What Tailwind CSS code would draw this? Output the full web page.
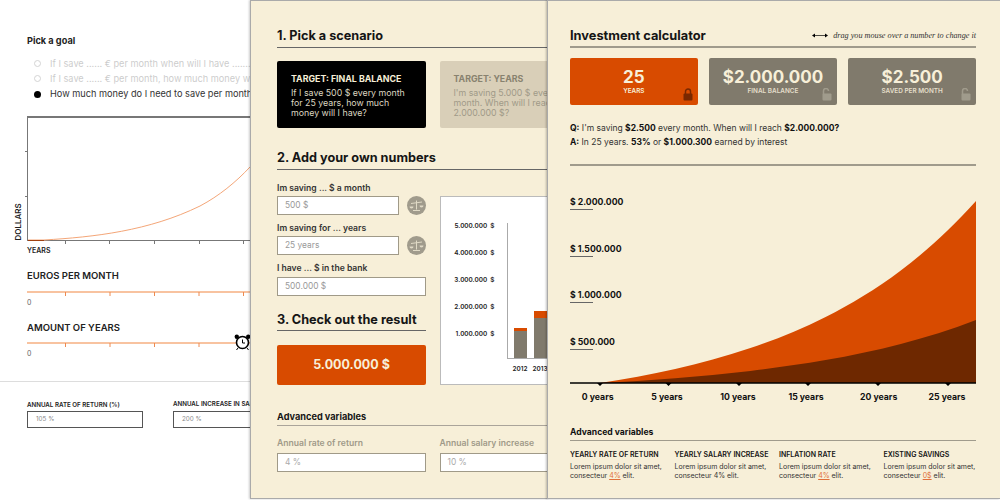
<!DOCTYPE html>
<html>
<head>
<meta charset="utf-8">
<script src="https://cdn.jsdelivr.net/npm/@tailwindcss/browser@4"></script>
</head>
<body class="m-0 bg-white">
<div class="relative w-[1000px] h-[500px] overflow-hidden bg-white font-['Inter',sans-serif] text-[#222]">

  <!-- Sheet 1: white goal picker -->
  <div class="absolute left-0 top-0 w-[250px] h-[500px] overflow-hidden">
    <div class="w-[400px] pt-[34px] pl-[27px]">
      <h3 class="text-[9.200px] leading-[13px] font-bold">Pick a goal</h3>
      <ul class="mt-[9px] pl-[7px] text-[9.200px] leading-[15.200px] text-[#333] whitespace-nowrap">
        <li class="flex items-center gap-[9px] opacity-25"><span class="w-[7px] h-[7px] rounded-full border border-[#555]"></span>If I save ...... € per month when will I have ....... €</li>
        <li class="flex items-center gap-[9px] opacity-25"><span class="w-[7px] h-[7px] rounded-full border border-[#555]"></span>If I save ...... € per month, how much money will I have</li>
        <li class="flex items-center gap-[9px]"><span class="w-[7px] h-[7px] rounded-full bg-black"></span>How much money do I need to save per month</li>
      </ul>
      <div class="relative mt-[14px] w-[300px] h-[125px] border-l border-t-2 border-[#777]">
        <svg class="absolute left-[-4px] top-[-2px] overflow-visible" width="260" height="130" viewBox="0 0 260 130" fill="none">
          <path d="M1 35.500h3M1 80.500h3" stroke="#777"/>
          <path d="M4 124.500h230" stroke="#777"/>
          <path d="M41.500 125v3M85.500 125v3M130.500 125v3M175.500 125v3M219.500 125v3" stroke="#777"/>
          <path d="M4 124H20C70 121 125 115 176 90C195 80 212 66 226 51" stroke="#f4a678"/>
          <path d="M4 124.500H20" stroke="#a04010"/>
        </svg>
        <span class="absolute left-[-10px] top-[118px] origin-left -rotate-90 text-[8px] leading-[9px] font-semibold">DOLLARS</span>
      </div>
      <div class="mt-[5px] text-[7px] leading-[10px] font-semibold">YEARS</div>
      <h4 class="mt-[13px] text-[9.500px] leading-[14px] font-semibold">EUROS PER MONTH</h4>
      <div class="relative mt-[8px] w-[300px] h-[2px] bg-[#f8c3a0]">
        <svg class="absolute left-0 top-[1px]" width="230" height="5"><path d="M38.500 0v4M83 0v4M127.500 0v4M172 0v4M216.500 0v4" stroke="#ee8a50"/></svg>
      </div>
      <div class="mt-[5px] text-[7px] leading-[10px] text-[#666]">0</div>
      <h4 class="mt-[13px] text-[9.500px] leading-[14px] font-semibold">AMOUNT OF YEARS</h4>
      <div class="relative mt-[7px] w-[300px] h-[2px] bg-[#f8c3a0]">
        <svg class="absolute left-0 top-[1px]" width="180" height="5"><path d="M38.500 0v4M83 0v4M127.500 0v4M172 0v4" stroke="#ee8a50"/></svg>
        <svg class="absolute left-[207px] top-[-8px]" width="17" height="17" viewBox="0 0 17 17" fill="none">
          <circle cx="8.500" cy="8.500" r="6" fill="#fff" stroke="#000" stroke-width="1.600"/>
          <circle cx="2.800" cy="2.800" r="2.200" fill="#000"/>
          <circle cx="14.200" cy="2.800" r="2.200" fill="#000"/>
          <path d="M8.500 5.500v3.500h2.500M4 14l-1.500 2M13 14l1.500 2" stroke="#000"/>
        </svg>
      </div>
      <div class="mt-[5px] text-[7px] leading-[10px] text-[#666]">0</div>
    </div>
    <div class="mt-[22px] h-px bg-[#ddd]"></div>
    <div class="flex pl-[27px] pt-[18px] w-[400px] gap-[30px]">
      <div class="w-[116px] shrink-0">
        <div class="text-[6.200px] leading-[9px] font-semibold whitespace-nowrap">ANNUAL RATE OF RETURN (%)</div>
        <div class="mt-[2px] h-[17px] border border-[#555] pl-[8px] text-[6.300px] leading-[15px] text-[#888]">105 %</div>
      </div>
      <div class="w-[116px] shrink-0 mt-[-1px]">
        <div class="text-[6.200px] leading-[9px] font-semibold whitespace-nowrap">ANNUAL INCREASE IN SALARY</div>
        <div class="mt-[3px] h-[17px] border border-[#555] pl-[8px] text-[6.300px] leading-[15px] text-[#888]">200 %</div>
      </div>
    </div>
  </div>

  <!-- Sheet 2: scenario form -->
  <div class="absolute left-[250px] top-0 w-[299px] h-[499px] overflow-hidden bg-[#f7efd8] border border-[#aaa] shadow-[-1px_0_2px_rgba(0,0,0,0.2)]">
    <div class="w-[480px] pl-[26px] pt-[26px]">
      <h2 class="w-[300px] text-[12.700px] leading-[18px] font-bold text-[#151515] border-b border-[#666] pb-[2px]">1. Pick a scenario</h2>
      <div class="flex gap-[13.500px] mt-[13px]">
        <div class="w-[149px] h-[67px] rounded-[2px] bg-black px-[14px] pt-[11px]">
          <div class="text-[8.800px] leading-[14px] font-bold text-[#f7efd8]">TARGET: FINAL BALANCE</div>
          <p class="mt-[2px] text-[8.800px] leading-[10.200px] text-[#ddd6c0]">If I save 500 $ every month for 25 years, how much money will I have?</p>
        </div>
        <div class="w-[149px] h-[67px] rounded-[2px] bg-[#d9cfb8] px-[14px] pt-[11px]">
          <div class="text-[8.800px] leading-[14px] font-bold text-[#88826f]">TARGET: YEARS</div>
          <p class="mt-[2px] text-[8.800px] leading-[10.200px] text-[#a09a88]">I'm saving 5.000 $ every month. When will I reach 2.000.000 $?</p>
        </div>
      </div>

      <h2 class="mt-[21px] w-[300px] text-[12.700px] leading-[18px] font-bold text-[#151515] border-b border-[#666] pb-[2px]">2. Add your own numbers</h2>
      <div class="flex mt-[11px] gap-[13.500px]">
        <div class="w-[149px]">
          <div class="text-[8.600px] leading-[14px] font-semibold text-[#333]">Im saving ... $ a month</div>
          <div class="flex items-center justify-between w-[149px] mt-px">
            <div class="w-[122px] h-[19px] border border-[#a09a88] bg-white pl-[7px] text-[8.400px] leading-[17px] text-[#999]">500 $</div>
            <svg width="19" height="19" viewBox="0 0 19 19"><circle cx="9.500" cy="9.500" r="9.500" fill="#a09b8c"/><path d="M9.500 4.500v9M6 14.500h7" stroke="#e0dac6" fill="none"/><path d="M4 7.500l11-1.500" stroke="#e0dac6" fill="none"/><path d="M2.500 10.500h4a2 2 0 0 1-4 0zM12.500 9.500h4a2 2 0 0 1-4 0z" fill="#e0dac6"/></svg>
          </div>
          <div class="mt-[6px] text-[8.600px] leading-[14px] font-semibold text-[#333]">Im saving for ... years</div>
          <div class="flex items-center justify-between w-[149px] mt-px">
            <div class="w-[122px] h-[19px] border border-[#a09a88] bg-white pl-[7px] text-[8.400px] leading-[17px] text-[#999]">25 years</div>
            <svg width="19" height="19" viewBox="0 0 19 19"><circle cx="9.500" cy="9.500" r="9.500" fill="#a09b8c"/><path d="M9.500 4.500v9M6 14.500h7" stroke="#e0dac6" fill="none"/><path d="M4 7.500l11-1.500" stroke="#e0dac6" fill="none"/><path d="M2.500 10.500h4a2 2 0 0 1-4 0zM12.500 9.500h4a2 2 0 0 1-4 0z" fill="#e0dac6"/></svg>
          </div>
          <div class="mt-[6px] text-[8.600px] leading-[14px] font-semibold text-[#333]">I have ... $ in the bank</div>
          <div class="mt-[2px] h-[19px] border border-[#a09a88] bg-white pl-[7px] text-[8.400px] leading-[17px] text-[#999]">500.000 $</div>
          <h2 class="mt-[15px] text-[12.700px] leading-[18px] font-bold text-[#151515] border-b border-[#666] pb-px whitespace-nowrap">3. Check out the result</h2>
          <div class="mt-[14px] h-[40px] rounded-[2px] bg-[#d84b00] text-center text-[12.500px] leading-[40px] font-bold text-[#f7efd8]">5.000.000 $</div>
        </div>
        <div class="relative w-[300px] h-[189px] mt-[15px] border border-[#bbb] bg-white text-[6.400px] font-semibold text-[#222]">
          <div class="absolute left-0 top-[24px] flex flex-col gap-[17px] w-[54px] leading-[10px] text-right">
            <span>5.000.000 &nbsp;$</span><span>4.000.000 &nbsp;$</span><span>3.000.000 &nbsp;$</span><span>2.000.000 &nbsp;$</span><span>1.000.000 &nbsp;$</span>
          </div>
          <div class="absolute left-[66px] top-[26px] w-[240px] h-[136px] border-l border-b border-[#aaa] flex items-end gap-[7px] pl-[6px]">
            <div class="w-[13px] h-[30px] bg-[#807a6c] border-t-[3px] border-[#d84b00]"></div>
            <div class="w-[13px] h-[47px] bg-[#807a6c] border-t-[7px] border-[#d84b00]"></div>
          </div>
          <div class="absolute left-[72px] top-[167px] flex gap-[5px] leading-[10px]">
            <span class="w-[15px] text-center">2012</span><span class="w-[15px] text-center">2013</span>
          </div>
        </div>
      </div>

      <h3 class="mt-[25px] w-[300px] text-[9.200px] leading-[14px] font-bold text-[#151515] border-b border-[#aaa49a] pb-px">Advanced variables</h3>
      <div class="flex gap-[13.500px] mt-[11px]">
        <div class="w-[149px]">
          <div class="text-[8.600px] leading-[12px] font-semibold text-[#a09a88]">Annual rate of return</div>
          <div class="mt-[4px] h-[19px] border border-[#a09a88] bg-white pl-[7px] text-[8.400px] leading-[17px] text-[#aaa]">4 %</div>
        </div>
        <div class="w-[149px]">
          <div class="text-[8.600px] leading-[12px] font-semibold text-[#a09a88]">Annual salary increase</div>
          <div class="mt-[4px] h-[19px] border border-[#a09a88] bg-white pl-[7px] text-[8.400px] leading-[17px] text-[#aaa]">10 %</div>
        </div>
      </div>
    </div>
  </div>

  <!-- Sheet 3: investment calculator -->
  <div class="absolute left-[547px] top-0 w-[453px] h-[499px] overflow-hidden bg-[#f7efd8] border-l border-t border-b border-[#aaa] shadow-[-1px_0_2px_rgba(0,0,0,0.25)]">
    <div class="w-[406px] ml-[22px] pt-[27px]">
      <div class="flex items-center justify-between border-b-2 border-[#a09b8c] pb-[2px] h-[20px]">
        <h1 class="text-[12.800px] leading-[18px] font-bold text-[#151515]">Investment calculator</h1>
        <div class="flex items-center gap-[5px] text-[8.200px] italic font-['Liberation_Serif',serif] text-[#333]">
          <svg width="16" height="5" viewBox="0 0 16 5"><path d="M2 2.500h12" stroke="#000" stroke-width="0.700"/><path d="M0 2.500l3-2v4zM16 2.500l-3-2v4z" fill="#000"/></svg>
          drag you mouse over a number to change it
        </div>
      </div>
      <div class="grid grid-cols-3 gap-[11.500px] mt-[10px]">
        <div class="relative h-[47px] rounded-[2px] bg-[#d84b00] pt-[9px] text-center text-[#f7efd8]">
          <div class="text-[17px] leading-[20px] font-bold">25</div>
          <div class="text-[6.400px] leading-[8px] font-semibold">YEARS</div>
          <svg class="absolute right-[5px] bottom-[4px]" width="10" height="13" viewBox="0 0 10 13"><path d="M2.500 6V3.500a2.500 2.500 0 0 1 5 0V6" fill="none" stroke="#7a2800" stroke-width="1.500"/><rect x="0.500" y="5.500" width="9" height="7" rx="1" fill="#7a2800"/></svg>
        </div>
        <div class="relative h-[47px] rounded-[2px] bg-[#807a6c] pt-[9px] text-center text-[#f7efd8]">
          <div class="text-[17px] leading-[20px] font-bold">$2.000.000</div>
          <div class="text-[6.400px] leading-[8px] font-semibold text-[#e5dfca]">FINAL BALANCE</div>
          <svg class="absolute right-[5px] bottom-[4px]" width="10" height="13" viewBox="0 0 10 13"><path d="M1.500 6V3a2.500 2.500 0 0 1 5 0" fill="none" stroke="#a09b8c" stroke-width="1.500"/><rect x="0.500" y="5.500" width="9" height="7" rx="1" fill="#a09b8c"/></svg>
        </div>
        <div class="relative h-[47px] rounded-[2px] bg-[#807a6c] pt-[9px] text-center text-[#f7efd8]">
          <div class="text-[17px] leading-[20px] font-bold">$2.500</div>
          <div class="text-[6.400px] leading-[8px] font-semibold text-[#e5dfca]">SAVED PER MONTH</div>
          <svg class="absolute right-[5px] bottom-[4px]" width="10" height="13" viewBox="0 0 10 13"><path d="M1.500 6V3a2.500 2.500 0 0 1 5 0" fill="none" stroke="#a09b8c" stroke-width="1.500"/><rect x="0.500" y="5.500" width="9" height="7" rx="1" fill="#a09b8c"/></svg>
        </div>
      </div>
      <div class="mt-[17px] text-[8.500px] leading-[13.500px] text-[#333]">
        <p><b class="text-[#111]">Q:</b> I'm saving <b class="text-[#111]">$2.500</b> every month. When will I reach <b class="text-[#111]">$2.000.000?</b></p>
        <p><b class="text-[#111]">A:</b> In 25 years. <b class="text-[#111]">53%</b> or <b class="text-[#111]">$1.000.300</b> earned by interest</p>
      </div>
      <div class="mt-[15px] h-[2px] bg-[#a09b8c]"></div>

      <svg class="mt-[24px] block" width="406" height="215" viewBox="0 0 406 215">
        <path d="M30 193C55.070 189.200 80.130 184.660 105.200 179C130.270 173.340 155.330 166.560 180.400 158.100C205.470 149.640 230.530 139.500 255.600 126.900C280.670 114.300 305.730 99.200 330.800 80.400C355.870 61.600 380.930 39.100 406 11V193Z" fill="#d84b00"/>
        <path d="M30 193C55.070 191.680 80.130 190.160 105.200 188.200C130.270 186.240 155.330 183.830 180.400 180.900C205.470 177.970 230.530 174.470 255.600 170.100C280.670 165.730 305.730 160.520 330.800 154C355.870 147.480 380.930 139.710 406 130V193Z" fill="#6e2800"/>
        <path d="M0 193h406" stroke="#000" stroke-width="1.500"/>
        <path d="M27 193l3 3 3-3zM95.500 193l3 3 3-3zM166 193l3 3 3-3zM235 193l3 3 3-3zM305 193l3 3 3-3zM375 193l3 3 3-3z" fill="#000"/>
        <path d="M0 19.500h23M0 66.500h23M0 112.500h23M0 159.500h23" stroke="#666"/>
        <g font-family="Inter" font-size="8.700" font-weight="700" fill="#111">
          <text x="0" y="15">$ 2.000.000</text>
          <text x="0" y="61.500">$ 1.500.000</text>
          <text x="0" y="108">$ 1.000.000</text>
          <text x="0" y="154.500">$ 500.000</text>
          <g text-anchor="middle">
            <text x="27.700" y="209.500">0 years</text>
            <text x="97" y="209.500">5 years</text>
            <text x="168" y="209.500">10 years</text>
            <text x="236" y="209.500">15 years</text>
            <text x="308.700" y="209.500">20 years</text>
            <text x="377" y="209.500">25 years</text>
          </g>
        </g>
      </svg>

      <h3 class="mt-[21px] text-[8.600px] leading-[12px] font-bold text-[#111] border-b border-[#a09b8c] pb-[2px]">Advanced variables</h3>
      <div class="grid grid-cols-4 gap-x-[12px] mt-[9px] text-[7px] leading-[9px] text-[#333]">
        <div><div class="font-semibold text-[#151515] mb-[2.500px] whitespace-nowrap">YEARLY RATE OF RETURN</div>Lorem ipsum dolor sit amet, consecteur <u class="text-[#e0703a]">4%</u> elit.</div>
        <div><div class="font-semibold text-[#151515] mb-[2.500px] whitespace-nowrap">YEARLY SALARY INCREASE</div>Lorem ipsum dolor sit amet, consecteur 4% elit.</div>
        <div><div class="font-semibold text-[#151515] mb-[2.500px] whitespace-nowrap">INFLATION RATE</div>Lorem ipsum dolor sit amet, consecteur <u class="text-[#e0703a]">4%</u> elit.</div>
        <div><div class="font-semibold text-[#151515] mb-[2.500px] whitespace-nowrap">EXISTING SAVINGS</div>Lorem ipsum dolor sit amet, consecteur <u class="text-[#e0703a]">0$</u> elit.</div>
      </div>
    </div>
  </div>
</div>
</body>
</html>
